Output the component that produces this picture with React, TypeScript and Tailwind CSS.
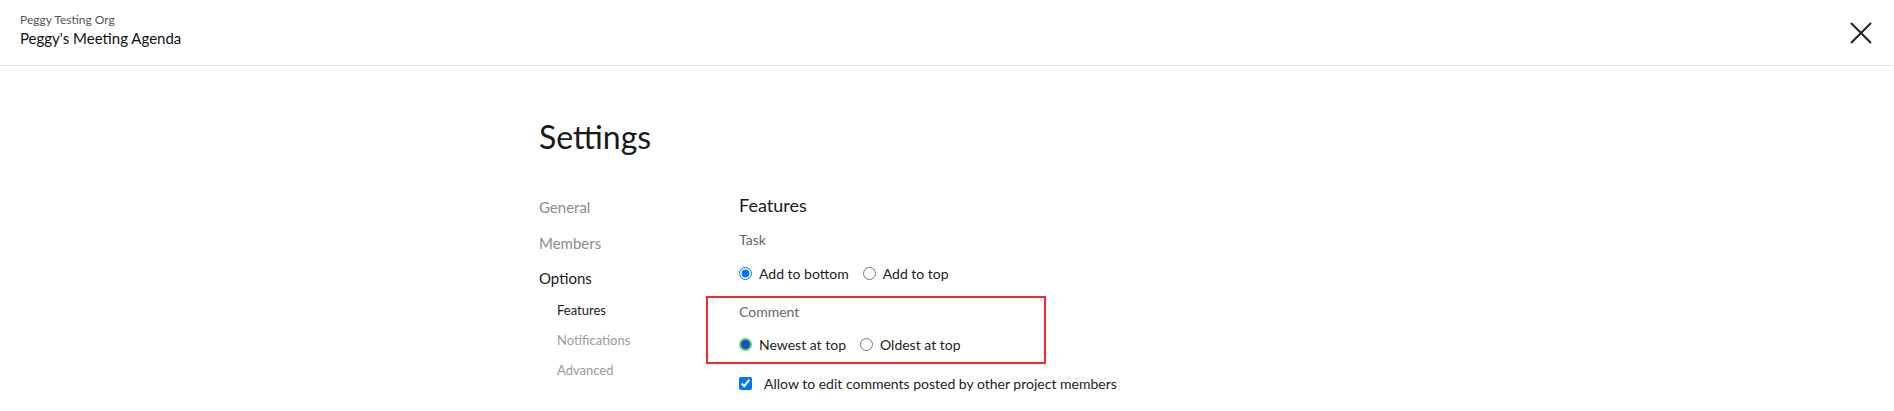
import React from 'react';

const navItems = [
    { label: 'General', active: false },
    { label: 'Members', active: false },
];

const subItems = [
    { label: 'Features', active: true },
    { label: 'Notifications', active: false },
    { label: 'Advanced', active: false },
];

const Radio: React.FC<{ checked?: boolean; name: string; label: string }> = ({ checked, name, label }) => (
    <label className="flex items-center gap-[7px] text-[14px] text-[#222]">
        <input type="radio" name={name} defaultChecked={checked} className="m-0 w-[13px] h-[13px]" />
        <span>{label}</span>
    </label>
);

const App: React.FC = () => {
    return (
        <div className="min-h-screen bg-white font-['Lato',sans-serif]">
            <header className="h-[66px] border-b border-[#e6e6e6] flex justify-between pl-5 pr-[22px]">
                <div className="pt-[12px]">
                    <div className="text-[12px] leading-[16px] text-[#555]">Peggy Testing Org</div>
                    <div className="text-[15px] leading-[20px] text-[#111]">Peggy's Meeting Agenda</div>
                </div>
                <button className="self-center mt-[1px] text-[#222]">
                    <svg width="22" height="22" viewBox="0 0 22 22" fill="none" stroke="currentColor" strokeWidth={2} strokeLinecap="round">
                        <path d="M1.5 1.5l19 19M20.5 1.5l-19 19" />
                    </svg>
                </button>
            </header>

            <main className="w-[816px] mx-auto pt-[51px]">
                <h1 className="text-[32px] leading-[40px] text-[#1a1a1a]">Settings</h1>

                <div className="mt-8 grid grid-cols-[200px_1fr]">
                    <nav className="flex flex-col">
                        {navItems.map((item) => (
                            <a key={item.label} className="h-9 leading-9 text-[15px] text-[#8c8c8c]">
                                {item.label}
                            </a>
                        ))}
                        <a className="h-[34px] leading-[34px] text-[15px] text-[#1a1a1a]">Options</a>
                        <div className="flex flex-col pl-[18px]">
                            {subItems.map((item) => (
                                <a
                                    key={item.label}
                                    className={`h-[30px] leading-[30px] text-[13px] ${item.active ? 'text-[#1a1a1a]' : 'text-[#9a9a9a]'}`}
                                >
                                    {item.label}
                                </a>
                            ))}
                        </div>
                    </nav>

                    <section className="flex flex-col items-start">
                        <h2 className="h-[33px] leading-[33px] text-[18px] text-[#1a1a1a]">Features</h2>
                        <div className="h-9 leading-9 text-[14px] text-[#666]">Task</div>
                        <div className="h-[30px] flex items-center gap-[14px]">
                            <Radio name="task" label="Add to bottom" checked />
                            <Radio name="task" label="Add to top" />
                        </div>

                        {/* comment order block, outlined */}
                        <div className="mt-2 -ml-[33px] w-[340px] h-[68px] border-2 border-[#f52a2a] pl-[31px]">
                            <div className="h-[28px] leading-[28px] text-[14px] text-[#666]">Comment</div>
                            <div className="mt-[2px] h-8 flex items-center gap-[14px]">
                                <label className="flex items-center gap-[7px] text-[14px] text-[#222]">
                                    <span className="w-[13px] h-[13px] rounded-full bg-[#0b55c4] border-2 border-[#6fc36f]" />
                                    <span>Newest at top</span>
                                </label>
                                <Radio name="comment" label="Oldest at top" />
                            </div>
                        </div>

                        <label className="h-[38px] flex items-center gap-3 text-[14px] text-[#222]">
                            <input type="checkbox" defaultChecked className="m-0 w-[13px] h-[13px]" />
                            <span>Allow to edit comments posted by other project members</span>
                        </label>
                    </section>
                </div>
            </main>
        </div>
    );
};

export default App;
